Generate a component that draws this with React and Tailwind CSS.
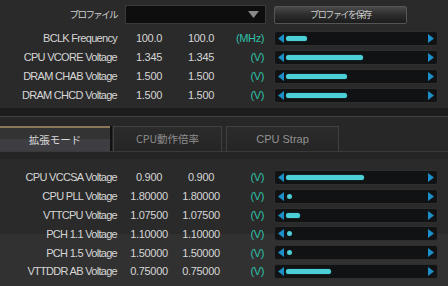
import React from 'react';

const topRows = [
  { label: 'BCLK Frequency', a: '100.0', b: '100.0', unit: '(MHz)', fill: 21 },
  { label: 'CPU VCORE Voltage', a: '1.345', b: '1.345', unit: '(V)', fill: 77 },
  { label: 'DRAM CHAB Voltage', a: '1.500', b: '1.500', unit: '(V)', fill: 61 },
  { label: 'DRAM CHCD Voltage', a: '1.500', b: '1.500', unit: '(V)', fill: 61 },
];

const bottomRows = [
  { label: 'CPU VCCSA Voltage', a: '0.900', b: '0.900', unit: '(V)', fill: 78 },
  { label: 'CPU PLL Voltage', a: '1.80000', b: '1.80000', unit: '(V)', fill: 0 },
  { label: 'VTTCPU Voltage', a: '1.07500', b: '1.07500', unit: '(V)', fill: 14 },
  { label: 'PCH 1.1 Voltage', a: '1.10000', b: '1.10000', unit: '(V)', fill: 0 },
  { label: 'PCH 1.5 Voltage', a: '1.50000', b: '1.50000', unit: '(V)', fill: 0 },
  { label: 'VTTDDR AB Voltage', a: '0.75000', b: '0.75000', unit: '(V)', fill: 45 },
];

const jp = { fontFamily: '"Noto Sans CJK JP", "Liberation Sans", sans-serif' };

const Slider = ({ fill }) => (
  <div className="flex h-[15px] w-[164px] items-center rounded-[3px] border border-[#2e2e2e] bg-[#111213] px-[3px]">
    <svg width="6" height="9" viewBox="0 0 6 9" className="shrink-0">
      <path d="M6 0 L0 4.5 L6 9 Z" fill="#1c8fc8" />
    </svg>
    <div className="ml-[2px] flex flex-1 items-center">
      {fill > 0 ? (
        <div
          className="h-[5px] rounded-full bg-[#4ccfd6] shadow-[0_0_1px_#2aa]"
          style={{ width: `${fill}px` }}
        />
      ) : (
        <div className="ml-[1px] h-[5px] w-[5px] rounded-full bg-[#4ccfd6]" />
      )}
    </div>
    <svg width="6" height="9" viewBox="0 0 6 9" className="shrink-0">
      <path d="M0 0 L6 4.5 L0 9 Z" fill="#1c8fc8" />
    </svg>
  </div>
);

const Row = ({ row }) => (
  <div className="flex h-[19px] items-center">
    <div className="w-[117px] whitespace-nowrap text-right text-[11px] tracking-[-0.7px] text-[#d6d6d6]">{row.label}</div>
    <div className="w-[64px] text-center text-[11px] tracking-[-0.3px] text-[#d6d6d6]">{row.a}</div>
    <div className="w-[40px] text-center text-[11px] tracking-[-0.3px] text-[#d6d6d6]">{row.b}</div>
    <div className="w-[43px] text-right text-[11px] tracking-[-0.4px] text-[#2fc0a8]">{row.unit}</div>
    <div className="ml-[10px]">
      <Slider fill={row.fill} />
    </div>
  </div>
);

export default function App() {
  return (
    <div
      className="flex h-[286px] w-[448px] flex-col overflow-hidden bg-[#2a2a2a]"
      style={{ fontFamily: '"Liberation Sans", Arial, sans-serif' }}
    >
      {/* Profile bar */}
      <div className="flex h-[29px] items-center">
        <div className="w-[117px] text-right text-[9.5px] tracking-[-1.6px] text-[#d0d0d0]" style={jp}>
          プロファイル
        </div>
        <div className="ml-[8px] flex h-[19px] w-[141px] items-center justify-end border border-[#3a3a3a] bg-[#0e0e0e] pr-[6px]">
          <svg width="11" height="7" viewBox="0 0 11 7">
            <path d="M0 0 H11 L5.5 7 Z" fill="#8a8a8a" />
          </svg>
        </div>
        <div
          className="ml-[8px] flex h-[18px] w-[133px] items-center justify-center rounded-[2px] border border-[#555] bg-gradient-to-b from-[#4a4a4a] via-[#2c2c2c] to-[#1c1c1c] text-[9px] tracking-[-1.4px] text-[#cfcfcf]"
          style={jp}
        >
          プロファイを保存
        </div>
      </div>

      {/* Top rows */}
      <div className="flex flex-col">
        {topRows.map((r) => (
          <Row key={r.label} row={r} />
        ))}
      </div>

      {/* Tab bar */}
      <div className="mt-[3px] h-[8px] bg-[#1c1c1c]" />
      <div className="h-[1px] bg-[#404040]" />
      <div className="flex h-[34px] items-end bg-[#272727]">
        <div className="flex h-[25px] w-[110px] flex-col border-t-2 border-[#8a7658]">
          <div className="flex flex-1 items-center justify-center bg-gradient-to-b from-[#333] from-50% to-[#3d3d42] to-50% text-[10.5px] text-[#d8d8d8]" style={jp}>
            拡張モード
          </div>
        </div>
        <div className="h-[25px] w-[2px] bg-[#111]" />
        <div className="ml-[1px] flex h-[25px] w-[109px] items-center justify-center border border-b-0 border-[#404040] bg-gradient-to-b from-[#2b2b2b] to-[#252525] text-[10.5px] text-[#8e8e8e]" style={jp}>
          CPU動作倍率
        </div>
        <div className="ml-[4px] flex h-[25px] w-[113px] items-center justify-center border border-b-0 border-[#404040] bg-gradient-to-b from-[#2b2b2b] to-[#252525] text-[11px] text-[#929292]">
          CPU Strap
        </div>
      </div>
      <div className="h-[1px] bg-[#3a3a3a]" />
      <div className="h-[7px] bg-[#242424]" />

      {/* Bottom rows */}
      <div className="flex flex-1 flex-col bg-gradient-to-b from-[#2a2a2a] from-[59%] to-[#313131] to-[59%] pt-[9px]">
        {bottomRows.map((r) => (
          <div key={r.label} className="-mb-[0.2px]">
            <Row row={r} />
          </div>
        ))}
      </div>
    </div>
  );
}
